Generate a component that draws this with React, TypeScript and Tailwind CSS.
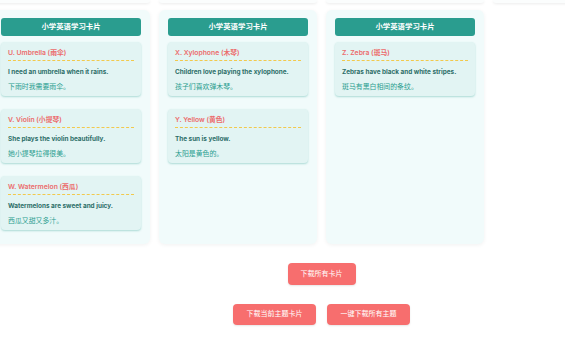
import React from "react";

type Word = { title: string; en: string; zh: string };

const columns: Word[][] = [
  [
    { title: "U. Umbrella (雨伞)", en: "I need an umbrella when it rains.", zh: "下雨时我需要雨伞。" },
    { title: "V. Violin (小提琴)", en: "She plays the violin beautifully.", zh: "她小提琴拉得很美。" },
    { title: "W. Watermelon (西瓜)", en: "Watermelons are sweet and juicy.", zh: "西瓜又甜又多汁。" },
  ],
  [
    { title: "X. Xylophone (木琴)", en: "Children love playing the xylophone.", zh: "孩子们喜欢弹木琴。" },
    { title: "Y. Yellow (黄色)", en: "The sun is yellow.", zh: "太阳是黄色的。" },
  ],
  [{ title: "Z. Zebra (斑马)", en: "Zebras have black and white stripes.", zh: "斑马有黑白相间的条纹。" }],
];

const font = { fontFamily: '"Inter", "Noto Sans CJK SC", sans-serif' };

function WordCard({ w }: { w: Word }) {
  return (
    <div className="h-[54px] rounded-[4px] bg-[#e2f4f3] px-[7px] pt-[6px] shadow-[0_1px_2px_rgba(42,157,143,0.35)]">
      <div className="border-b border-dashed border-[#f2c94c] pb-[2px] text-[6.8px] font-semibold leading-[10px] text-[#ec6b6b]">
        {w.title}
      </div>
      <div className="mt-[5px] text-[6.4px] font-bold leading-[12px] text-[#2c6e68]">{w.en}</div>
      <div className="mt-[3px] text-[6.9px] leading-[12px] text-[#2a9d8f]">{w.zh}</div>
    </div>
  );
}

function Column({ words }: { words: Word[] }) {
  return (
    <div className="flex w-[158px] shrink-0 flex-col rounded-[6px] bg-[#f1fbfb] px-[9px] pt-[8px] pb-[14px] shadow-[0_1px_4px_rgba(0,0,0,0.06)]">
      <div className="flex h-[18px] items-center justify-center rounded-[3px] bg-[#2a9d8f] text-[7.4px] font-bold text-white">
        小学英语学习卡片
      </div>
      <div className="mt-[6px] flex flex-col gap-[13px]">
        {words.map((w) => (
          <WordCard key={w.title} w={w} />
        ))}
      </div>
    </div>
  );
}

export default function App() {
  return (
    <div className="h-[339px] w-[565px] overflow-hidden bg-white" style={font}>
      <div className="ml-[-8px] w-[659px]">
        <div className="flex gap-[9px]">
          {[0, 1, 2, 3].map((i) => (
            <div key={i} className="h-[3px] w-[158px] shrink-0 rounded-b-[6px] bg-[#fbfdfd] shadow-[0_1px_3px_rgba(0,0,0,0.08)]" />
          ))}
        </div>
        <div className="mt-[7px] flex items-stretch gap-[9px]">
          {columns.map((c, i) => (
            <Column key={i} words={c} />
          ))}
          <div className="w-[158px] shrink-0" />
        </div>
        <div className="mt-[19px] flex justify-center">
          <button className="h-[22px] w-[68px] rounded-[4px] bg-[#f76e6e] text-[7px] text-white shadow-[0_1px_2px_rgba(0,0,0,0.1)]">
            下载所有卡片
          </button>
        </div>
        <div className="mt-[19px] flex justify-center gap-[11px]">
          <button className="h-[21px] w-[83px] rounded-[4px] bg-[#f76e6e] text-[7px] text-white shadow-[0_1px_2px_rgba(0,0,0,0.1)]">
            下载当前主题卡片
          </button>
          <button className="h-[21px] w-[83px] rounded-[4px] bg-[#f76e6e] text-[7px] text-white shadow-[0_1px_2px_rgba(0,0,0,0.1)]">
            一键下载所有主题
          </button>
        </div>
      </div>
    </div>
  );
}
